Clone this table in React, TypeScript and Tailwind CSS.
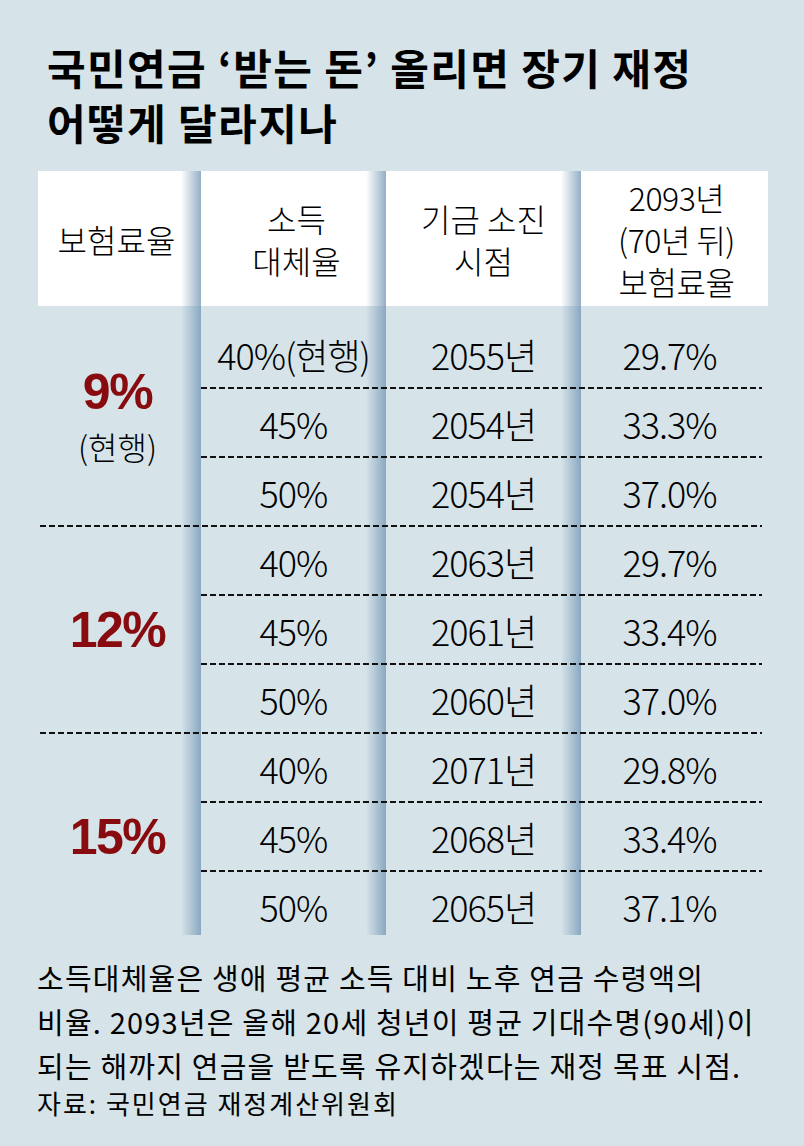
import React from 'react';

const KR = "font-['Noto_Sans_CJK_KR',sans-serif]";

const groups = [
  {
    rate: '9%',
    note: '(현행)',
    rows: [
      ['40%(현행)', '2055년', '29.7%'],
      ['45%', '2054년', '33.3%'],
      ['50%', '2054년', '37.0%'],
    ],
  },
  {
    rate: '12%',
    rows: [
      ['40%', '2063년', '29.7%'],
      ['45%', '2061년', '33.4%'],
      ['50%', '2060년', '37.0%'],
    ],
  },
  {
    rate: '15%',
    rows: [
      ['40%', '2071년', '29.8%'],
      ['45%', '2068년', '33.4%'],
      ['50%', '2065년', '37.1%'],
    ],
  },
];

function Dash({ className = '' }: { className?: string }) {
  return (
    <div
      className={`relative h-[2px] bg-[repeating-linear-gradient(to_right,#111_0_6px,transparent_6px_9px)] ${className}`}
    />
  );
}

function Strip({ left }: { left: string }) {
  return (
    <div
      className={`absolute top-0 bottom-[4px] ${left} w-[20px] bg-[linear-gradient(to_right,rgba(130,160,188,0),rgba(112,148,180,0.75))]`}
    />
  );
}

export default function App() {
  return (
    <div className={`w-[804px] h-[1146px] bg-[#d6e3e8] text-black ${KR}`}>
      {/* Title */}
      <div className="pl-[47px] pt-[39px] text-[42px] font-bold leading-[55px] tracking-[1.4px]">
        <div className="whitespace-nowrap">국민연금 ‘받는 돈’ 올리면 장기 재정</div>
        <div className="whitespace-nowrap">어떻게 달라지나</div>
      </div>

      {/* Table */}
      <div className="relative ml-[38px] mt-[22px] w-[730px] font-light">
        <div className="grid h-[135px] grid-cols-[163px_185px_195px_187px] bg-white text-[32px] leading-[42px]">
          <div className="flex items-center justify-center pr-[6px]">보험료율</div>
          <div className="flex flex-col items-center justify-center pl-[6px]">
            <span>소득</span>
            <span>대체율</span>
          </div>
          <div className="flex flex-col items-center justify-center">
            <span>기금 소진</span>
            <span>시점</span>
          </div>
          <div className="flex flex-col items-center justify-center pl-[4px] tracking-[-0.5px]">
            <span>2093년</span>
            <span>(70년 뒤)</span>
            <span>보험료율</span>
          </div>
        </div>

        <Strip left="left-[143px]" />
        <Strip left="left-[328px]" />
        <Strip left="left-[523px]" />

        <div className="pt-[14px]">
          {groups.map((g, gi) => (
            <div key={g.rate}>
              {gi > 0 && <Dash className="ml-[2px] mr-[6px]" />}
              <div className="grid grid-cols-[163px_567px]">
                <div
                  className={`relative flex flex-col items-center justify-center pr-[4px] ${
                    g.note ? 'pb-[16px]' : ''
                  }`}
                >
                  <span
                    className={`font-['Liberation_Sans',sans-serif] text-[50px] font-bold leading-[52px] tracking-[-1.5px] text-[#880c0f] ${
                      g.note ? 'mb-[10px]' : ''
                    }`}
                  >
                    {g.rate}
                  </span>
                  {g.note && <span className="text-[32px] leading-[36px]">{g.note}</span>}
                </div>
                <div>
                  {g.rows.map((r, ri) => (
                    <div key={ri}>
                      {ri > 0 && <Dash className="mr-[6px]" />}
                      <div className="grid h-[67px] grid-cols-[185px_195px_187px] text-[36px] tracking-[-1px]">
                        <div className="flex items-center justify-center">{r[0]}</div>
                        <div className="flex items-center justify-center">{r[1]}</div>
                        <div className="flex items-center justify-center pr-[10px]">{r[2]}</div>
                      </div>
                    </div>
                  ))}
                </div>
              </div>
            </div>
          ))}
        </div>
      </div>

      {/* Notes */}
      <div className="pl-[37px] pt-[16px] text-[29px] leading-[44px] tracking-[1.2px]">
        <div className="whitespace-nowrap">소득대체율은 생애 평균 소득 대비 노후 연금 수령액의</div>
        <div className="whitespace-nowrap">비율. 2093년은 올해 20세 청년이 평균 기대수명(90세)이</div>
        <div className="whitespace-nowrap">되는 해까지 연금을 받도록 유지하겠다는 재정 목표 시점.</div>
        <div className="mt-[-4px] whitespace-nowrap text-[26px] leading-[40px] tracking-[2px]">
          자료: 국민연금 재정계산위원회
        </div>
      </div>
    </div>
  );
}
